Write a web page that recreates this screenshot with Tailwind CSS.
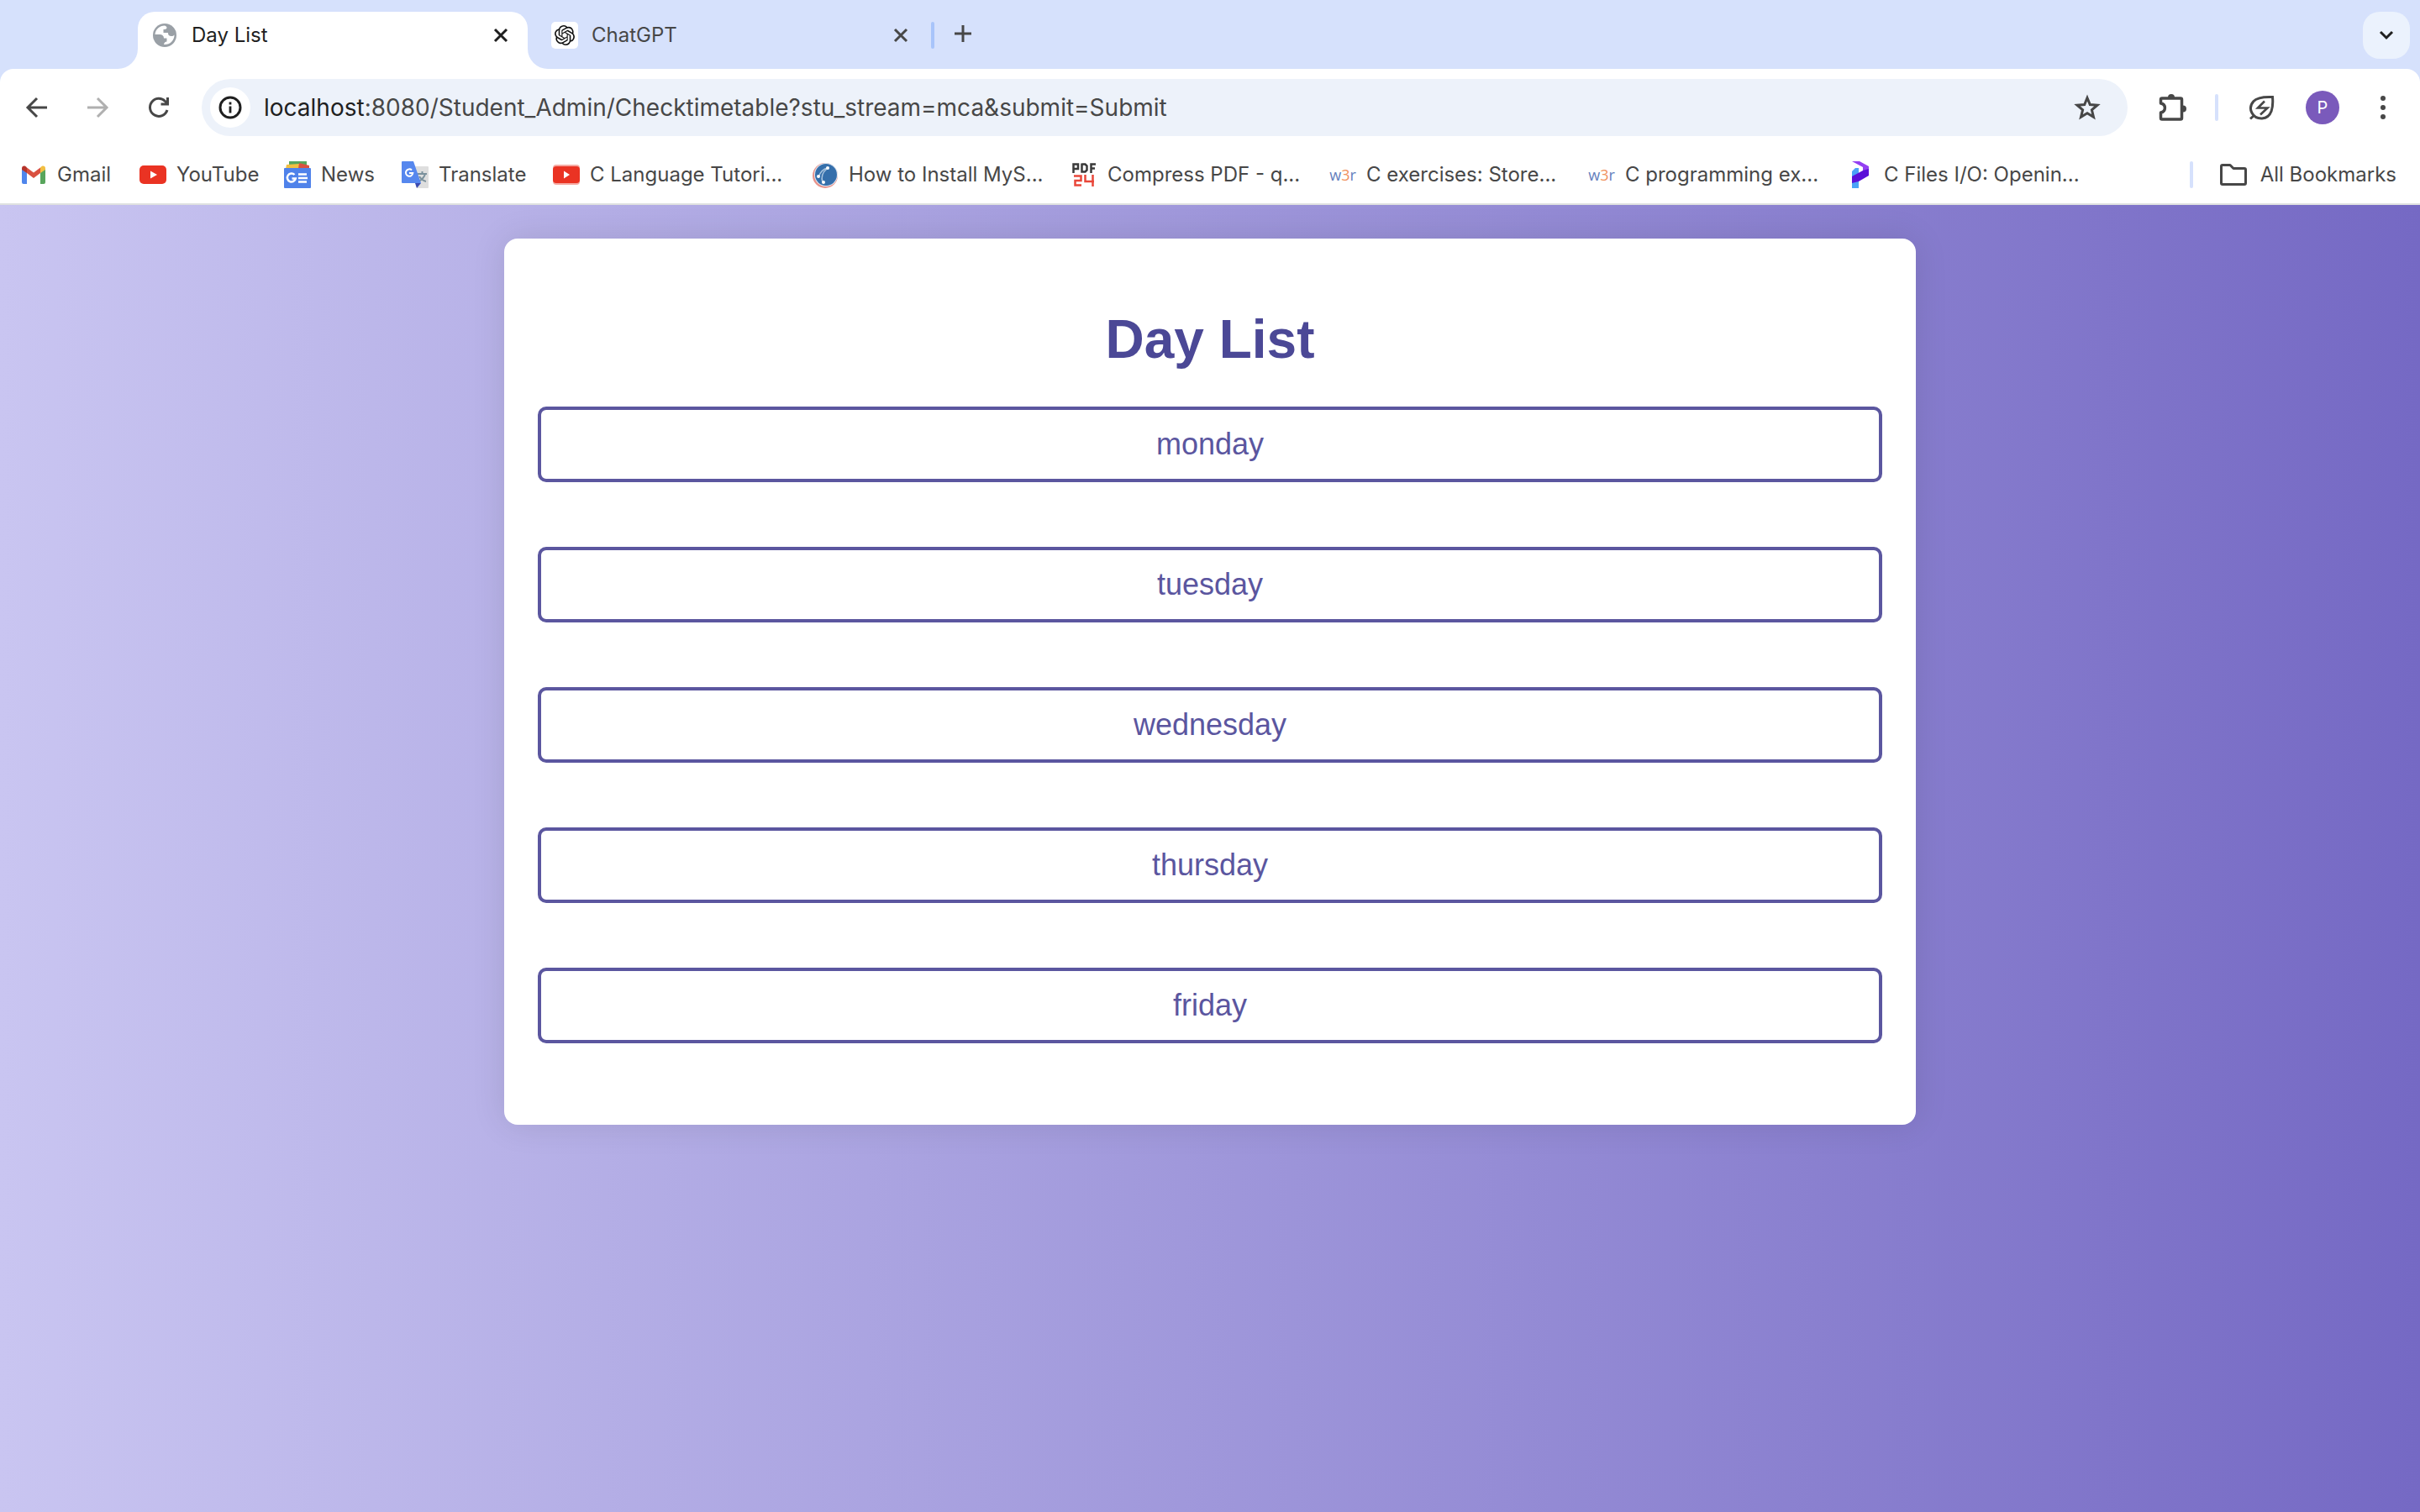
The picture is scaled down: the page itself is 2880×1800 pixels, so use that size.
<!DOCTYPE html>
<html lang="en">
<head>
<meta charset="utf-8">
<title>Day List</title>
<script src="https://cdn.jsdelivr.net/npm/@tailwindcss/browser@4"></script>
</head>
<body class="flex min-h-screen flex-col bg-white font-['Inter',sans-serif] text-[#474747]">
<header class="bg-[#d6e1fc]">
  <!-- Tab strip -->
  <div class="flex h-[82px] items-end pr-3">
    <div class="flex h-6 w-[164px] bg-white"><div class="w-full rounded-br-3xl bg-[#d6e1fc]"></div></div>
    <div class="flex h-[68px] w-[464px] items-center rounded-t-[20px] bg-white pr-5 pb-3 pl-4">
      <svg class="size-8" viewBox="0 0 32 32"><circle cx="16" cy="16" r="14" fill="#9aa0a6"/><path d="M16 4.500c-6 0-11 4.500-11.500 10.500h5.500c3 0 5 1.500 5 4.500h3.500v4c-1.500 0-3 .500-3.500 3.500 7 .500 12.500-4.500 12.500-11.500-1 1-2 1.500-3.500 1.500-3 0-4-1.500-4-4h-5.500v-4c2.500 0 4-.500 4-2 0-1-1-2-2.500-2.500z" fill="#fff"/></svg>
      <span class="ml-4 flex-1 text-2xl text-[#1f1f1f]">Day List</span>
      <button type="button" aria-label="Close Day List" class="size-6"><svg class="size-6" viewBox="0 0 24 24" fill="none" stroke="#1f1f1f" stroke-width="3"><path d="M5 5l14 14M19 5L5 19"/></svg></button>
    </div>
    <div class="flex h-6 w-6 bg-white"><div class="w-full rounded-bl-3xl bg-[#d6e1fc]"></div></div>
    <div class="flex h-[68px] w-[456px] items-center pr-6 pb-3 pl-1">
      <svg class="size-8" viewBox="0 0 32 32"><rect width="32" height="32" rx="5" fill="#fff"/><svg x="4" y="4" width="24" height="24" viewBox="0 0 24 24"><path fill="#111" d="M22.280 9.820a5.980 5.980 0 0 0-.520-4.910 6.050 6.050 0 0 0-6.510-2.900A6.070 6.070 0 0 0 4.980 4.180a5.980 5.980 0 0 0-4 2.900 6.050 6.050 0 0 0 .740 7.100 5.980 5.980 0 0 0 .510 4.910 6.050 6.050 0 0 0 6.510 2.900A5.980 5.980 0 0 0 13.260 24a6.060 6.060 0 0 0 5.770-4.210 5.990 5.990 0 0 0 4-2.900 6.060 6.060 0 0 0-.750-7.070zm-9.020 12.610a4.480 4.480 0 0 1-2.880-1.040l.140-.080 4.780-2.760a.790.790 0 0 0 .390-.680v-6.740l2.020 1.170a.070.070 0 0 1 .040.050v5.580a4.500 4.500 0 0 1-4.490 4.500zm-9.660-4.130a4.470 4.470 0 0 1-.530-3.010l.140.090 4.780 2.760a.770.770 0 0 0 .780 0l5.840-3.370v2.330a.080.080 0 0 1-.030.060L9.740 19.950a4.500 4.500 0 0 1-6.140-1.650zM2.340 7.900a4.490 4.490 0 0 1 2.370-1.980v5.690a.770.770 0 0 0 .390.680l5.810 3.350-2.020 1.170a.080.080 0 0 1-.070 0l-4.830-2.790A4.500 4.500 0 0 1 2.340 7.870zm16.600 3.860l-5.840-3.390 2.020-1.160a.080.080 0 0 1 .070 0l4.830 2.790a4.490 4.490 0 0 1-.680 8.100v-5.680a.790.790 0 0 0-.400-.660zm2.010-3.020l-.140-.090-4.780-2.780a.780.780 0 0 0-.790 0L9.410 9.230V6.900a.070.070 0 0 1 .030-.060l4.830-2.790a4.500 4.500 0 0 1 6.680 4.660zM8.310 12.860l-2.020-1.160a.080.080 0 0 1-.040-.060V6.070a4.500 4.500 0 0 1 7.380-3.450l-.140.080-4.780 2.760a.790.790 0 0 0-.390.680zm1.100-2.360l2.600-1.500 2.610 1.500v3l-2.600 1.500-2.610-1.500z"/></svg></svg>
      <span class="ml-4 flex-1 text-2xl">ChatGPT</span>
      <button type="button" aria-label="Close ChatGPT" class="size-6"><svg class="size-6" viewBox="0 0 24 24" fill="none" stroke="#474747" stroke-width="3"><path d="M5 5l14 14M19 5L5 19"/></svg></button>
    </div>
    <div class="mb-6 h-8 w-1 shrink-0 rounded-sm bg-[#a8c4fa]"></div>
    <button type="button" aria-label="New tab" class="mb-7 ml-5 size-7"><svg class="size-7" viewBox="0 0 28 28" stroke="#474747" stroke-width="3"><path d="M14 4v20M4 14h20"/></svg></button>
    <button type="button" aria-label="Search tabs" class="mb-3 ml-auto flex size-14 items-center justify-center rounded-[20px] bg-[#ebf2fd]"><svg class="size-6" viewBox="0 0 24 24" fill="none" stroke="#1f1f1f" stroke-width="3"><path d="M5 8l7 7 7-7"/></svg></button>
  </div>
  <div class="rounded-t-2xl border-b-2 border-[#dfe1e0] bg-white">
    <!-- Toolbar -->
    <div class="flex h-[92px] items-center pr-7 pl-7">
      <button type="button" aria-label="Back" class="size-8"><svg class="size-8" viewBox="0 0 32 32" fill="none" stroke="#474747" stroke-width="3"><path d="M28 16H6M16 5L5 16l11 11"/></svg></button>
      <button type="button" aria-label="Forward" class="ml-10 size-8"><svg class="size-8" viewBox="0 0 32 32" fill="none" stroke="#b0b0b0" stroke-width="3"><path d="M4 16h22M16 5l11 11-11 11"/></svg></button>
      <button type="button" aria-label="Reload" class="ml-10 size-8"><svg class="size-8" viewBox="0 0 32 32" fill="none" stroke="#474747" stroke-width="3"><path d="M27 19a10.500 10.500 0 1 1-2.500-10.500L27.500 11.500M27.500 4v8h-8"/></svg></button>
      <div class="ml-9 flex h-[68px] flex-1 items-center rounded-full bg-[#edf2fa] pr-8 pl-[10px]">
        <button type="button" aria-label="View site information" class="flex size-12 items-center justify-center rounded-full bg-white"><svg class="size-7" viewBox="0 0 28 28" fill="none" stroke="#1f1f1f" stroke-width="3"><circle cx="14" cy="14" r="12"/><path d="M14 12.500v8M14 7.500v3" stroke-width="2.800"/></svg></button>
        <a href="#" class="ml-4 flex-1 text-[28px] leading-9"><span class="text-[#1f1f1f]">localhost</span>:8080/Student_Admin/Checktimetable?stu_stream=mca&amp;submit=Submit</a>
        <button type="button" aria-label="Bookmark this tab" class="size-8"><svg class="size-8" viewBox="0 0 32 32" fill="none" stroke="#474747" stroke-width="3"><path d="M16 4.500l3.300 8 8.700.700-6.600 5.600 2.100 8.500L16 22.800l-7.500 4.500 2.100-8.500L4 13.200l8.700-.700z"/></svg></button>
      </div>
      <button type="button" aria-label="Extensions" class="ml-9 size-9"><svg class="size-9" viewBox="0 0 36 36"><path d="M5 7h22q1.500 0 1.500 1.500v22q0 1.500-1.500 1.500H5q-1.500 0-1.500-1.500V24c6.500-1 6.500-10 0-11V8.500Q3.500 7 5 7z" fill="none" stroke="#474747" stroke-width="3.500" stroke-linejoin="round"/><path d="M12 6a4 4 0 0 1 8 0zM30 15.500a4 4 0 0 1 0 8z" fill="#474747"/></svg></button>
      <div class="ml-8 h-8 w-1 rounded-sm bg-[#d6e1fc]"></div>
      <button type="button" aria-label="Energy saver" class="ml-9 size-8"><svg class="size-8" viewBox="0 0 32 32" fill="none" stroke="#474747" stroke-width="3"><path d="M28.500 3.500C18 3 10 4 6 8.500c-8 9-1 21 10 20.500C28 28 29.500 15 28.500 3.500zM7 25l-5 4.500"/><path d="M19 8.500L11 16.500h11.500L14 24.500" stroke-width="2.600"/></svg></button>
      <button type="button" aria-label="Profile" class="ml-9 size-10 rounded-full bg-[#7a5abb] text-xl text-white">P</button>
      <button type="button" aria-label="Menu" class="ml-9 size-8"><svg class="size-8" viewBox="0 0 32 32" fill="#474747"><circle cx="16" cy="5" r="3"/><circle cx="16" cy="16" r="3"/><circle cx="16" cy="27" r="3"/></svg></button>
    </div>
    <!-- Bookmarks bar -->
    <nav aria-label="Bookmarks" class="flex h-[68px] items-center pr-7 pl-6 text-2xl leading-8 whitespace-nowrap">
      <a href="#" class="flex w-[142px] items-center gap-3"><svg class="size-8 shrink-0" viewBox="0 0 32 32"><path d="M2 9l6 4.500V27H4q-2 0-2-2z" fill="#4f86ec"/><path d="M24 13.500L30 9v16q0 2-2 2h-4z" fill="#58a55c"/><path d="M8 7.500l8 6 8-6V14l-8 6-8-6z" fill="#d95140"/><path d="M24 7.500C27 4 30 6 30 8.500V10l-6 4z" fill="#f2bf42"/><path d="M8 7.500C5 4 2 6 2 8.500V10l6 4z" fill="#b5342b"/></svg>Gmail</a>
      <a href="#" class="flex w-[172px] items-center gap-3"><svg class="size-8 shrink-0" viewBox="0 0 32 32"><rect y="5" width="32" height="22" rx="5" fill="#ea3323"/><path d="M13 11.500v9l8-4.500z" fill="#fff"/></svg>YouTube</a>
      <a href="#" class="flex w-[140px] items-center gap-3"><svg class="size-8 shrink-0" viewBox="0 0 32 32"><path d="M6 0h21v8H6z" fill="#58a55c"/><path d="M3 4l15-1 4 6H2z" fill="#f2bf42"/><path d="M18 2l12 3v4H17z" fill="#d95140"/><rect y="8" width="32" height="24" rx="1" fill="#4f82ea"/><path d="M12.500 16a5 5 0 1 0 1.300 4.500H9.500M17 15.500h10M17 20h11M17 24.500h10" stroke="#fff" stroke-width="2.500" fill="none"/></svg>News</a>
      <a href="#" class="flex w-[180px] items-center gap-3"><svg class="size-8 shrink-0" viewBox="0 0 32 32"><path d="M12 6h19q1 0 1 1v24q0 1-1 1H18z" fill="#dedede"/><path d="M19 15h11M24.500 12v3M28 15c-1 4-4 7-8 9M21 18c2 3 4 5 8 6" stroke="#7b919c" stroke-width="2" fill="none"/><path d="M16 26h7l-5 6z" fill="#3a4ab0"/><path d="M1 0h13l9 26H1q-1 0-1-1V1q0-1 1-1z" fill="#5687ee"/><path d="M12 10.500a4.200 4.200 0 1 0 1.300 3.500H9" stroke="#fff" stroke-width="2" fill="none"/></svg>Translate</a>
      <a href="#" class="flex w-[308px] items-center gap-3"><svg class="size-8 shrink-0" viewBox="0 0 32 32"><rect y="4" width="32" height="24" rx="4" fill="#f5a9a2"/><rect y="6" width="32" height="20" rx="4" fill="#ea3323"/><path d="M13 11.500v9l7-4.500z" fill="#fff"/></svg>C Language Tutori...</a>
      <a href="#" class="flex w-[308px] items-center gap-3"><svg class="size-8 shrink-0" viewBox="0 0 32 32"><circle cx="16" cy="17" r="15" fill="#e8938b"/><circle cx="17" cy="16" r="14" fill="#dce6f1"/><circle cx="17" cy="16" r="13" fill="#356fab"/><path d="M8 19c2-6 6-10 11-11M13 25c-2-6 0-12 5-16" stroke="#a9c4de" stroke-width="1.500" fill="none"/><circle cx="19" cy="8" r="2" fill="#fff"/><circle cx="8" cy="18" r="2" fill="#fff"/><circle cx="14" cy="25" r="2" fill="#fff"/></svg>How to Install MyS...</a>
      <a href="#" class="flex w-[308px] items-center gap-3"><svg class="size-8 shrink-0" viewBox="0 0 32 32" fill="none" stroke-width="2.500"><path d="M3.500 14V3.500h5.500v5.500H4M13.500 2.500v10h4l2-2V5.500l-2-2h-4M24.500 14V3.500H30M24.500 8.500H29" stroke="#3a3a3a"/><path d="M4 17.500h8.500v5.500H5.500v5.500H13M17.500 16v8H28M26.500 16v14" stroke="#e9473a"/></svg>Compress PDF - q...</a>
      <a href="#" class="flex w-[308px] items-center gap-3"><span class="w-8 shrink-0 text-center font-['Open_Sans',sans-serif] text-lg font-medium text-[#6480bd]">w<span class="text-[#f0925e]">3</span>r</span>C exercises: Store...</a>
      <a href="#" class="flex w-[308px] items-center gap-3"><span class="w-8 shrink-0 text-center font-['Open_Sans',sans-serif] text-lg font-medium text-[#6480bd]">w<span class="text-[#f0925e]">3</span>r</span>C programming ex...</a>
      <a href="#" class="flex w-[308px] items-center gap-3"><svg class="size-8 shrink-0" viewBox="0 0 32 32"><path d="M6 12l4-4h4v24H6z" fill="#4aa3f7"/><path d="M6 0h9l11 6v9l-7-4V7z" fill="#9440f2"/><path d="M26 9v8l-12 7-8 2v-8l13-7z" fill="#5b10d8"/></svg>C Files I/O: Openin...</a>
      <div class="ml-auto h-8 w-1 rounded-sm bg-[#d6e1fc]"></div>
      <a href="#" class="ml-8 flex items-center gap-4"><svg class="size-8" viewBox="0 0 32 32" fill="none" stroke="#474747" stroke-width="3" stroke-linejoin="round"><path d="M1.500 6v20q0 1.500 1.500 1.500h26q1.500 0 1.500-1.500V10q0-1.500-1.500-1.500H16l-4-4H3Q1.500 4.500 1.500 6z"/></svg>All Bookmarks</a>
    </nav>
  </div>
</header>
<main class="flex-1 bg-linear-[90deg,#c9c5f1,#7569c4] px-10 pt-10 font-['Liberation_Sans',Arial,sans-serif]">
  <section class="mx-auto max-w-[1680px] rounded-2xl bg-white px-10 pt-20 pb-[97px] text-center shadow-[0_0_40px_rgba(0,0,0,0.1)]">
    <h1 class="text-[64px] leading-[80px] font-bold text-[#4b4896]">Day List</h1>
    <ul class="mt-10 flex flex-col gap-[77px] text-4xl text-[#5b569f]">
      <li><a href="#" class="block rounded-[10px] border-4 border-[#5b569f] py-5 leading-[42px]">monday</a></li>
      <li><a href="#" class="block rounded-[10px] border-4 border-[#5b569f] py-5 leading-[42px]">tuesday</a></li>
      <li><a href="#" class="block rounded-[10px] border-4 border-[#5b569f] py-5 leading-[42px]">wednesday</a></li>
      <li><a href="#" class="block rounded-[10px] border-4 border-[#5b569f] py-5 leading-[42px]">thursday</a></li>
      <li><a href="#" class="block rounded-[10px] border-4 border-[#5b569f] py-5 leading-[42px]">friday</a></li>
    </ul>
  </section>
</main>
</body>
</html>
